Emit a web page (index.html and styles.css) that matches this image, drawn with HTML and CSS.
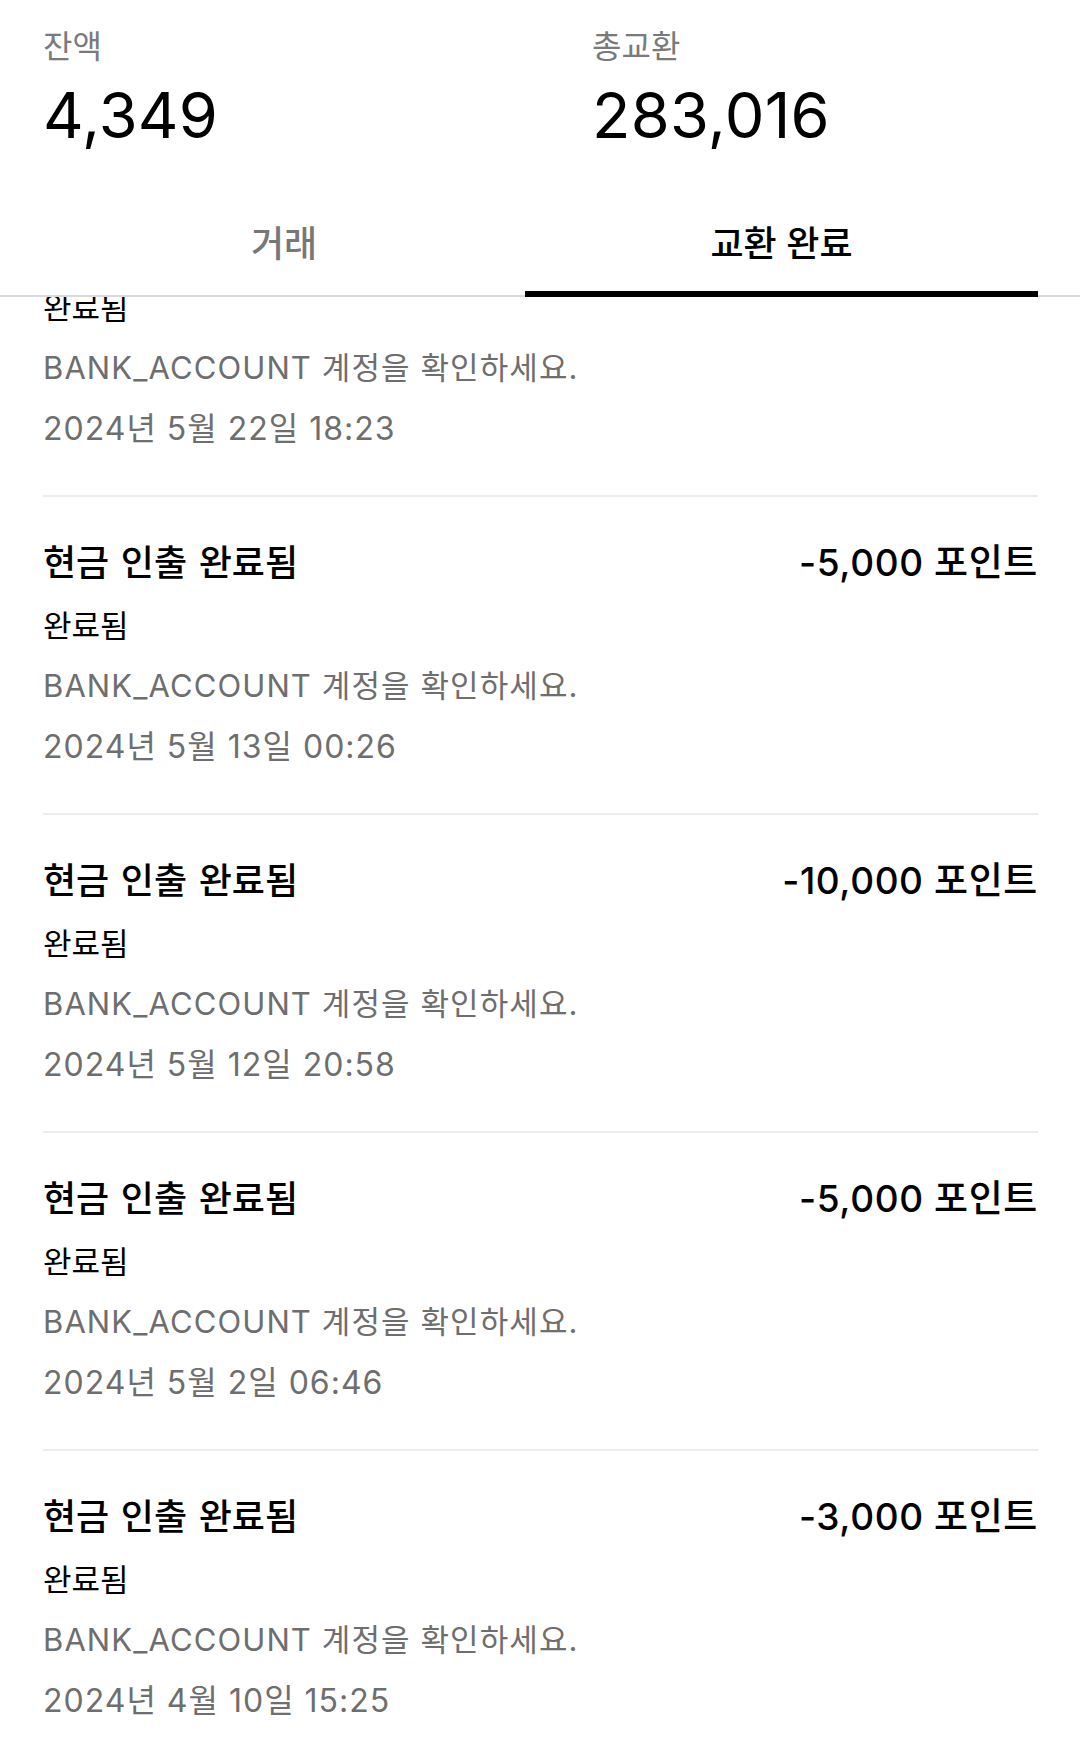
FILE: index.html
```html
<!DOCTYPE html>
<html lang="ko">
<head>
<meta charset="utf-8">
<title>교환 완료</title>
<link rel="stylesheet" href="styles.css">
</head>
<body>
<div class="screen">
  <header class="header">
    <div class="summary">
      <div class="stat">
        <div class="stat-label">잔액</div>
        <div class="stat-value">4,349</div>
      </div>
      <div class="stat">
        <div class="stat-label">총교환</div>
        <div class="stat-value">283,016</div>
      </div>
    </div>
    <nav class="tabs">
      <div class="tab tab-left">거래</div>
      <div class="tab tab-right active">교환 완료</div>
    </nav>
  </header>
  <main class="list">
    <div class="list-inner">
      <div class="item item-partial">
        <div class="item-status">완료됨</div>
        <div class="item-note">BANK_ACCOUNT 계정을 확인하세요.</div>
        <div class="item-date">2024년 5월 22일 18:23</div>
      </div>
      <div class="item">
        <div class="item-head">
          <span class="item-title">현금 인출 완료됨</span>
          <span class="item-amount">-5,000 포인트</span>
        </div>
        <div class="item-status">완료됨</div>
        <div class="item-note">BANK_ACCOUNT 계정을 확인하세요.</div>
        <div class="item-date">2024년 5월 13일 00:26</div>
      </div>
      <div class="item">
        <div class="item-head">
          <span class="item-title">현금 인출 완료됨</span>
          <span class="item-amount">-10,000 포인트</span>
        </div>
        <div class="item-status">완료됨</div>
        <div class="item-note">BANK_ACCOUNT 계정을 확인하세요.</div>
        <div class="item-date">2024년 5월 12일 20:58</div>
      </div>
      <div class="item">
        <div class="item-head">
          <span class="item-title">현금 인출 완료됨</span>
          <span class="item-amount">-5,000 포인트</span>
        </div>
        <div class="item-status">완료됨</div>
        <div class="item-note">BANK_ACCOUNT 계정을 확인하세요.</div>
        <div class="item-date">2024년 5월 2일 06:46</div>
      </div>
      <div class="item">
        <div class="item-head">
          <span class="item-title">현금 인출 완료됨</span>
          <span class="item-amount">-3,000 포인트</span>
        </div>
        <div class="item-status">완료됨</div>
        <div class="item-note">BANK_ACCOUNT 계정을 확인하세요.</div>
        <div class="item-date">2024년 4월 10일 15:25</div>
      </div>
    </div>
  </main>
</div>
</body>
</html>
```
FILE: styles.css
```css
* { box-sizing: border-box; }
html, body {
  margin: 0;
  padding: 0;
  background: #ffffff;
}
body {
  font-family: "Inter", "Noto Sans CJK KR", sans-serif;
  color: #000;
}
.screen {
  width: 1080px;
  height: 1753px;
  overflow: hidden;
  display: flex;
  flex-direction: column;
}
.header {
  flex: none;
  background: #fff;
}
.summary {
  display: grid;
  grid-template-columns: 549px 1fr;
  padding: 26px 43px 0 43px;
}
.stat-label {
  font-size: 32px;
  line-height: 42px;
  color: #7a7a7a;
  letter-spacing: 0;
}
.stat-value {
  margin-top: 4px;
  font-size: 63px;
  line-height: 86px;
  font-weight: 400;
  color: #000;
  letter-spacing: 0.3px;
}
.tabs {
  display: flex;
  padding: 0 42px 0 43px;
  border-bottom: 2px solid #d9d9d9;
}
.tab {
  position: relative;
  padding-top: 58px;
  height: 137px;
  line-height: 56px;
  font-size: 36px;
  font-weight: 500;
  text-align: center;
  color: #777;
}
.tab-left { width: 482px; }
.tab-right { flex: 1; }
.tab.active { color: #000; }
.tab.active::after {
  content: "";
  position: absolute;
  left: 0;
  right: 0;
  bottom: -2px;
  height: 6px;
  background: #000;
}
.list {
  flex: 1;
  overflow: hidden;
  padding: 0 42px 0 43px;
}
.list-inner {
  margin-top: -58px;
}
.item {
  padding: 36px 0 36px;
}
.item + .item {
  border-top: 2px solid #ececec;
}
.item-head {
  display: flex;
  justify-content: space-between;
  align-items: center;
  height: 60px;
  line-height: 60px;
}
.item-title {
  font-size: 36px;
  font-weight: 500;
  letter-spacing: 0;
  word-spacing: 2px;
}
.item-amount {
  font-size: 37px;
  font-weight: 500;
  letter-spacing: 0.6px;
}
.item-status {
  margin-top: 3px;
  font-size: 31px;
  line-height: 60px;
  letter-spacing: 0;
}
.item-note {
  font-size: 31px;
  line-height: 60px;
  color: #6e6e6e;
  letter-spacing: 1.1px;
}
.item-date {
  font-size: 32px;
  line-height: 61px;
  color: #6e6e6e;
  letter-spacing: 1px;
}
```
